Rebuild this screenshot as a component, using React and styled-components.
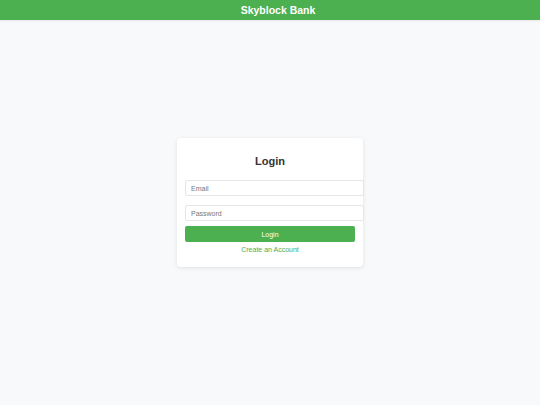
import React from "react";
import styled, { createGlobalStyle } from "styled-components";

const GlobalStyle = createGlobalStyle`
    body {
        margin: 0;
        background-color: #f8f9fb;
        font-family: "Liberation Sans", Arial, sans-serif;
    }
`;

const Header = styled.header`
    align-items: center;
    background-color: #4caf50;
    box-shadow: 0 1px 2px rgba(0, 0, 0, 0.08);
    color: white;
    display: flex;
    font-size: 10.5px;
    font-weight: bold;
    height: 20px;
    justify-content: center;
    padding-left: 16px;
`;

const Main = styled.main`
    align-items: center;
    display: flex;
    height: calc(100vh - 40px);
    justify-content: center;
`;

const Card = styled.div`
    background-color: white;
    border-radius: 4px;
    box-shadow: 0 1px 4px rgba(0, 0, 0, 0.1);
    box-sizing: border-box;
    display: flex;
    flex-direction: column;
    padding: 8px 8px 13px;
    width: 186px;
`;

const Title = styled.h2`
    color: #333;
    font-size: 11px;
    line-height: 13px;
    margin: 9px 0 12px;
    text-align: center;
`;

const Input = styled.input`
    border: 1px solid #e6e6e6;
    border-radius: 2px;
    box-sizing: border-box;
    font-family: inherit;
    font-size: 7px;
    height: 16px;
    margin-bottom: ${({last}) => last ? "5px" : "9px"};
    outline: none;
    padding: 0 5px;
    width: calc(100% + 9px);
    &::placeholder {
        color: #777;
    }
`;

const Button = styled.button`
    background-color: #4caf50;
    border: none;
    border-radius: 2px;
    color: white;
    font-family: inherit;
    font-size: 7px;
    height: 16px;
    padding: 0;
    width: 100%;
`;

const Link = styled.a`
    color: #4caf50;
    font-size: 7px;
    line-height: 8px;
    margin-top: 4px;
    text-align: center;
    text-decoration: none;
`;

export default function App (){
    return (
        <>
            <GlobalStyle />
            <Header>Skyblock Bank</Header>
            <Main>
                <Card>
                    <Title>Login</Title>
                    <Input type="email" placeholder="Email" />
                    <Input type="password" placeholder="Password" last />
                    <Button>Login</Button>
                    <Link href="#">Create an Account</Link>
                </Card>
            </Main>
        </>
    )
}
